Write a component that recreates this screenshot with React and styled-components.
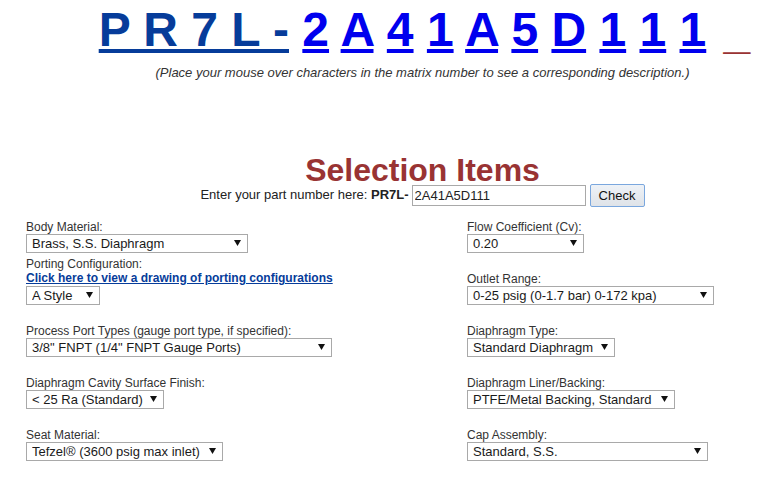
import React from 'react';
import styled, { createGlobalStyle } from 'styled-components';

const GlobalStyle = createGlobalStyle`
  body {
    margin: 0;
    background: #fff;
    font-family: Arial, "Liberation Sans", sans-serif;
    color: #222;
  }
`;

const matrix = ['2', 'A', '4', '1', 'A', '5', 'D', '1', '1', '1'];

const leftFields = [
  { label: 'Body Material:', value: 'Brass, S.S. Diaphragm', width: 222 },
  {
    label: 'Porting Configuration:',
    link: 'Click here to view a drawing of porting configurations',
    value: 'A Style',
    width: 74,
  },
  { label: 'Process Port Types (gauge port type, if specified):', value: '3/8" FNPT (1/4" FNPT Gauge Ports)', width: 306 },
  { label: 'Diaphragm Cavity Surface Finish:', value: '< 25 Ra (Standard)', width: 138 },
  { label: 'Seat Material:', value: 'Tefzel® (3600 psig max inlet)', width: 197 },
];

const rightFields = [
  { label: 'Flow Coefficient (Cv):', value: '0.20', width: 117 },
  { label: 'Outlet Range:', value: '0-25 psig (0-1.7 bar) 0-172 kpa)', width: 247 },
  { label: 'Diaphragm Type:', value: 'Standard Diaphragm', width: 148 },
  { label: 'Diaphragm Liner/Backing:', value: 'PTFE/Metal Backing, Standard', width: 208 },
  { label: 'Cap Assembly:', value: 'Standard, S.S.', width: 241 },
];

const Arrow = () => (
  <ArrowIcon viewBox="0 0 7 6" width="7" height="6">
    <path d="M0 0 H7 L3.5 6 Z" fill="#111" />
  </ArrowIcon>
);

const Dropdown = ({ value, width }) => (
  <SelectWrap>
    <Select $width={width} defaultValue={value}>
      <option>{value}</option>
    </Select>
    <Arrow />
  </SelectWrap>
);

const Field = ({ label, link, value, width }) => (
  <Cell>
    <Label>{label}</Label>
    {link && <DrawingLink href="#">{link}</DrawingLink>}
    <Dropdown value={value} width={width} />
  </Cell>
);

const App = () => {
  const rows = leftFields.map((f, i) => [f, rightFields[i]]);
  return (
    <>
      <GlobalStyle />
      <Header>
        <MatrixLine>
          <FixedPart href="#">P R 7 L -</FixedPart>
          {matrix.map((c, i) => (
            <React.Fragment key={i}>
              {' '}
              <MatrixChar href="#">{c}</MatrixChar>
            </React.Fragment>
          ))}
          {' '}
          <Cursor>_</Cursor>
        </MatrixLine>
        <Hint>(Place your mouse over characters in the matrix number to see a corresponding description.)</Hint>
        <Title>Selection Items</Title>
        <PartForm>
          Enter your part number here: <b>PR7L-</b>
          <PartInput defaultValue="2A41A5D111" />
          <CheckButton>Check</CheckButton>
        </PartForm>
      </Header>
      <FieldGrid>
        {rows.map(([l, r], i) => (
          <React.Fragment key={i}>
            <Field {...l} />
            <Field {...r} />
          </React.Fragment>
        ))}
      </FieldGrid>
    </>
  );
};

const Header = styled.div`
  padding-left: 88px;
  padding-top: 6px;
  text-align: center;
`;

const MatrixLine = styled.div`
  font-size: 48px;
  font-weight: bold;
  line-height: 48px;
  white-space: pre;
`;

const FixedPart = styled.a`
  color: #063c9a;
  text-decoration: underline;
`;

const MatrixChar = styled.a`
  color: #0000ee;
  text-decoration: underline;
`;

const Cursor = styled.span`
  color: #993333;
  position: relative;
  left: 4px;
  top: 2px;
`;

const Hint = styled.div`
  margin-top: 11px;
  font-size: 13px;
  line-height: 16px;
  font-style: italic;
  color: #333;
`;

const Title = styled.div`
  margin-top: 73px;
  font-size: 32px;
  font-weight: bold;
  line-height: 32px;
  color: #993333;
`;

const PartForm = styled.div`
  margin-top: -3px;
  font-size: 13px;
  line-height: 24px;
  color: #222;
  display: flex;
  justify-content: center;
  align-items: center;
  white-space: pre;
`;

const PartInput = styled.input`
  width: 174px;
  height: 21px;
  box-sizing: border-box;
  margin: 0 4px 0 3px;
  padding: 1px 2px;
  border: 1px solid #a9a9a9;
  font-family: Arial, "Liberation Sans", sans-serif;
  font-size: 13px;
  color: #222;
`;

const CheckButton = styled.button`
  width: 55px;
  height: 23px;
  box-sizing: border-box;
  border: 1px solid #7aa7de;
  border-radius: 2px;
  background: linear-gradient(#eef2f7, #dfe3e8);
  font-family: Arial, "Liberation Sans", sans-serif;
  font-size: 13px;
  color: #111;
  padding: 0;
`;

const FieldGrid = styled.div`
  display: grid;
  grid-template-columns: 441px 1fr;
  grid-template-rows: 46px repeat(4, 52px);
  align-items: end;
  padding-left: 26px;
`;

const Cell = styled.div`
  display: flex;
  flex-direction: column;
  align-items: flex-start;
`;

const Label = styled.span`
  font-size: 12px;
  line-height: 14px;
  color: #333;
`;

const DrawingLink = styled.a`
  font-size: 12px;
  line-height: 15px;
  font-weight: bold;
  color: #063c9a;
  text-decoration: underline;
`;

const SelectWrap = styled.span`
  position: relative;
  display: inline-block;
  line-height: 0;
`;

const Select = styled.select`
  appearance: none;
  width: ${p => p.$width}px;
  height: 19px;
  box-sizing: border-box;
  margin: 0;
  padding: 0 16px 0 5px;
  border: 1px solid #a9a9a9;
  border-radius: 0;
  background: #fff;
  font-family: Arial, "Liberation Sans", sans-serif;
  font-size: 13px;
  color: #1a1a1a;
`;

const ArrowIcon = styled.svg`
  position: absolute;
  right: 7px;
  top: 6px;
  pointer-events: none;
`;

export default App;
